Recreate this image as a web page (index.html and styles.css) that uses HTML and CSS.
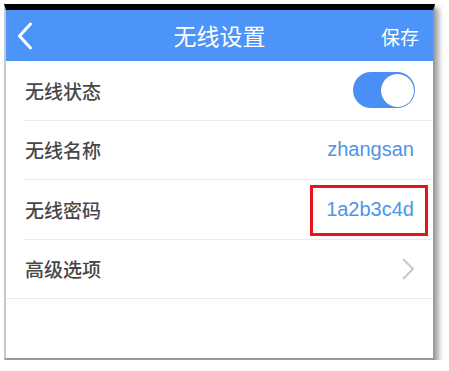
FILE: index.html
```html
<!DOCTYPE html>
<html lang="zh-CN">
<head>
<meta charset="utf-8">
<link rel="stylesheet" href="styles.css">
</head>
<body>
<div class="frame">
  <div class="header">
    <svg class="back" width="16" height="28" viewBox="0 0 16 28"><path d="M13.5 2 L2.5 14 L13.5 26" fill="none" stroke="#fff" stroke-width="3" stroke-linecap="round" stroke-linejoin="round"/></svg>
    <div class="title">无线设置</div>
    <div class="save">保存</div>
  </div>
  <div class="list">
    <div class="row">
      <span class="label">无线状态</span>
      <span class="toggle"><span class="knob"></span></span>
    </div>
    <div class="row">
      <span class="label">无线名称</span>
      <span class="value">zhangsan</span>
    </div>
    <div class="row">
      <span class="label">无线密码</span>
      <span class="value boxed">1a2b3c4d</span>
    </div>
    <div class="row last">
      <span class="label">高级选项</span>
      <svg class="chev" width="14" height="24" viewBox="0 0 14 24"><path d="M2 2 L12 12 L2 22" fill="none" stroke="#c8c8c8" stroke-width="2"/></svg>
    </div>
  </div>
</div>
</body>
</html>
```
FILE: styles.css
```css
html, body {
  margin: 0;
  padding: 0;
  background: #fff;
}
body {
  padding: 4px 0 0 4px;
  font-family: "Noto Sans CJK SC", "Liberation Sans", sans-serif;
}
.frame {
  width: 427px;
  height: 348px;
  border-top: 6px solid #000;
  border-left: 2px solid #c4c8d0;
  border-right: 2px solid #9a9a9a;
  border-bottom: 2px solid #9a9a9a;
  background: #fff;
  box-shadow: 4px 4px 5px rgba(0,0,0,0.35);
  overflow: hidden;
}
.header {
  height: 51px;
  background: #4d94f8;
  display: flex;
  align-items: center;
  position: relative;
  color: #fff;
}
.back {
  margin-left: 11px;
  margin-top: 1px;
}
.title {
  position: absolute;
  left: 0;
  right: 0;
  text-align: center;
  font-size: 23px;
  line-height: 51px;
  pointer-events: none;
}
.save {
  margin-left: auto;
  margin-right: 14px;
  font-size: 19px;
  margin-top: 2px;
}
.row {
  height: 59.5px;
  box-sizing: border-box;
  margin-left: 18px;
  padding-right: 19px;
  border-bottom: 1px solid #ebebeb;
  display: flex;
  align-items: center;
  justify-content: space-between;
}
.row.last {
  margin-left: 0;
  padding-left: 18px;
}
.label {
  font-size: 19px;
  font-weight: 500;
  color: #474747;
  padding-left: 1px;
}
.value {
  font-family: "Liberation Sans", Arial, sans-serif;
  font-size: 20px;
  color: #5094e6;
  position: relative;
}
.boxed::after {
  content: "";
  position: absolute;
  left: -16px;
  right: -14px;
  top: -13px;
  bottom: -15px;
  border: 3px solid #e8141c;
}
.toggle {
  width: 62px;
  height: 36px;
  border-radius: 18px;
  background: #4a8ff5;
  position: relative;
  margin-right: -1px;
}
.knob {
  position: absolute;
  right: 1px;
  top: 1.5px;
  width: 33px;
  height: 33px;
  border-radius: 50%;
  background: #fff;
  box-shadow: 0 0 1px rgba(0,0,0,0.3);
}
.chev {
  margin-right: -1px;
}
```
